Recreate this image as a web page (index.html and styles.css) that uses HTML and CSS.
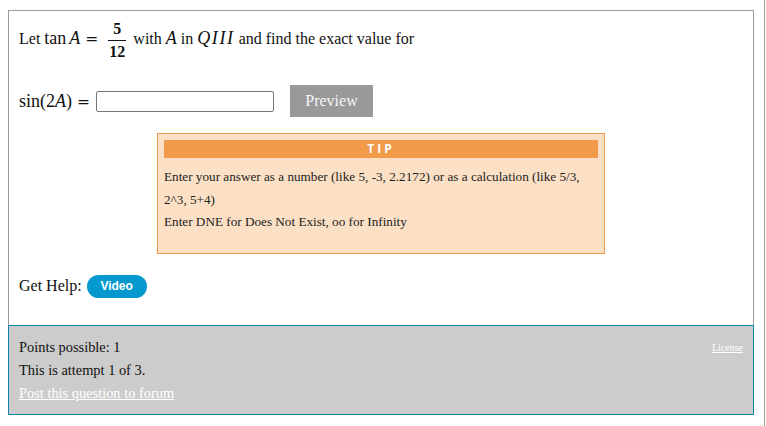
FILE: index.html
```html
<!DOCTYPE html>
<html>
<head>
<meta charset="utf-8">
<link rel="stylesheet" href="styles.css">
</head>
<body>
<div class="frame">
  <div class="question">
    <p class="prompt">Let <span class="m">tan<i class="v">A</i><span class="eq">=</span></span><span class="frac"><span class="num">5</span><span class="den">12</span></span> with <i class="m">A</i> in <i class="m quad">QIII</i> and find the exact value for</p>
    <div class="answer-row">
      <span class="m">sin(2<i>A</i>)<span class="eq">=</span></span>
      <input class="answer" type="text">
      <button class="preview">Preview</button>
    </div>
    <div class="tip">
      <div class="tip-head">TIP</div>
      <p class="tip-text">Enter your answer as a number (like 5, -3, 2.2172) or as a calculation (like 5/3, 2^3, 5+4)</p>
      <p class="tip-text">Enter DNE for Does Not Exist, oo for Infinity</p>
    </div>
    <div class="help">Get Help: <a class="video" href="#">Video</a></div>
  </div>
  <div class="footer">
    <div class="footer-main">
      <p>Points possible: 1</p>
      <p>This is attempt 1 of 3.</p>
      <p><a class="forum" href="#">Post this question to forum</a></p>
    </div>
    <a class="license" href="#">License</a>
  </div>
</div>
</body>
</html>
```

FILE: styles.css
```css
html, body {
  margin: 0;
  padding: 0;
  background: #ffffff;
}
body {
  font-family: "Liberation Serif", "Times New Roman", serif;
  font-size: 16px;
  color: #111111;
}
.frame {
  width: 746px;
  height: 416px;
  padding: 10px 10px 0 8px;
  border-right: 1px solid #a0a0a0;
}
.question {
  border: 1px solid #9a9a9a;
  border-bottom: none;
  padding: 10px 10px 27px 10px;
}
.prompt {
  margin: 0;
  line-height: 20px;
}
.m {
  font-family: "Liberation Serif", serif;
  font-size: 18px;
}
.m i, i.m {
  font-style: italic;
}
.quad {
  letter-spacing: 1.6px;
}
.v {
  margin-left: 3px;
}
.eq {
  display: inline-block;
  font-family: "DejaVu Serif", serif;
  font-style: normal;
  font-size: 15.5px;
  margin: 0 5px;
}
.frac {
  display: inline-flex;
  flex-direction: column;
  align-items: center;
  vertical-align: middle;
  margin: 0 3px 0 5px;
  font-size: 16px;
  line-height: 16px;
  font-weight: bold;
}
.num {
  padding: 0 4px 3px;
}
.den {
  border-top: 1px solid #111;
  padding: 3px 1px 0;
}
.answer-row {
  margin-top: 25px;
  display: flex;
  align-items: center;
  height: 32px;
}
.answer {
  margin-left: 1px;
  width: 178px;
  height: 21px;
  box-sizing: border-box;
  border: 1px solid #767676;
  border-radius: 2px;
  padding: 0;
}
.preview {
  margin-left: 16px;
  width: 83px;
  height: 32px;
  border: none;
  background: #999999;
  color: #f6f6f6;
  font-family: "Liberation Serif", serif;
  font-size: 16px;
  padding: 0;
}
.tip {
  margin: 16px 0 0 138px;
  width: 434px;
  border: 1px solid #ef9a48;
  background: #fce0c5;
  padding: 6px 6px 19px;
}
.tip-head {
  height: 18px;
  background: #f09a4a;
  color: #ffffff;
  font-family: "Open Sans", "Liberation Sans", sans-serif;
  font-weight: bold;
  font-size: 12px;
  line-height: 18px;
  letter-spacing: 3px;
  text-align: center;
  margin-bottom: 8px;
}
.tip-text {
  margin: 0;
  font-size: 13.2px;
  line-height: 22.5px;
  color: #222;
}
.help {
  margin-top: 21px;
  display: flex;
  align-items: center;
  gap: 5px;
  height: 23px;
}
.video {
  display: inline-flex;
  align-items: center;
  justify-content: center;
  width: 60px;
  height: 23px;
  border-radius: 12px;
  background: #0399cf;
  color: #ffffff;
  font-family: "Liberation Sans", Arial, sans-serif;
  font-weight: bold;
  font-size: 12px;
  text-decoration: none;
}
.footer {
  border: 1px solid #0a87ab;
  background: #cccccc;
  padding: 10px 10px 9px;
  display: flex;
  justify-content: space-between;
  align-items: flex-start;
}
.footer-main p {
  margin: 0;
  font-size: 14.4px;
  line-height: 23px;
  color: #111;
}
.forum {
  color: #ffffff;
}
.license {
  color: #ffffff;
  font-size: 10px;
  line-height: 23px;
}
```
